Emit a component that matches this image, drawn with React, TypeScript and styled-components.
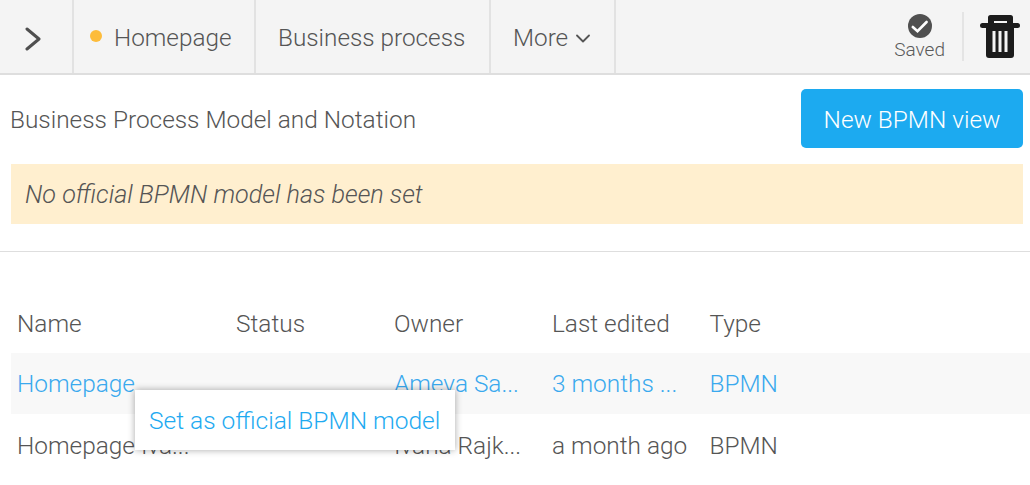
import React from "react";
import styled, { createGlobalStyle } from "styled-components";

const Global = createGlobalStyle`
  html, body { margin: 0; padding: 0; background: #fff; }
  body { font-family: Roboto, "Liberation Sans", sans-serif; font-weight: 300; color: #4a4a4a; overflow: hidden; }
  * { box-sizing: border-box; }
`;

const Page = styled.div`
  width: 1030px;
  height: 485px;
  overflow: hidden;
`;

const TopBar = styled.header`
  display: flex;
  align-items: stretch;
  height: 75px;
  background: #f4f4f4;
  border-bottom: 2px solid #dedede;
`;

const Toggle = styled.div`
  width: 74px;
  display: flex;
  align-items: center;
  padding-left: 25px;
  padding-top: 5px;
  border-right: 2px solid #e2e2e2;
`;

const Tab = styled.div<{ $w: number; $pad: number }>`
  width: ${(p) => p.$w}px;
  padding-left: ${(p) => p.$pad}px;
  padding-top: 3px;
  display: flex;
  align-items: center;
  font-size: 24.3px;
  line-height: 1;
  color: #555;
  border-right: 2px solid #e2e2e2;
  white-space: nowrap;
`;

const Dot = styled.span`
  width: 12px;
  height: 12px;
  border-radius: 50%;
  background: #fdbc3b;
  margin-right: 12px;
  margin-top: -4px;
`;

const Caret = styled.svg`
  margin-left: 8px;
`;

const Actions = styled.div`
  margin-left: auto;
  display: flex;
  align-items: center;
`;

const SavedBox = styled.div`
  display: flex;
  flex-direction: column;
  align-items: center;
  font-size: 19px;
  color: #5a5a5a;
  line-height: 21px;
  margin-right: 17px;
  gap: 1px;
  margin-top: 1px;
`;

const Divider = styled.div`
  width: 2px;
  height: 49px;
  background: #e4e4e4;
  margin-right: 16px;
`;

const Trash = styled.svg`
  margin-right: 10px;
`;

const Main = styled.main`
  padding: 14px 7px 0 11px;
`;

const TitleRow = styled.div`
  display: flex;
  justify-content: space-between;
  align-items: center;
  height: 59px;
`;

const Title = styled.h1`
  margin: 0;
  padding-top: 2px;
  font-size: 24.4px;
  font-weight: 300;
  color: #555;
  margin-left: -1px;
`;

const PrimaryButton = styled.button`
  width: 222px;
  height: 59px;
  padding: 2px 0 0;
  background: #1caaf0;
  color: #fff;
  border: 0;
  border-radius: 5px;
  font-family: inherit;
  font-size: 24.4px;
  font-weight: 300;
`;

const Notice = styled.div`
  margin-top: 16px;
  height: 60px;
  background: #ffefcf;
  display: flex;
  align-items: center;
  padding-left: 14px;
  font-size: 25.2px;
  font-style: italic;
  color: #555;
`;

const Rule = styled.hr`
  border: 0;
  height: 1px;
  background: #dedede;
  margin: 27px -7px 0 -11px;
`;

const Table = styled.div`
  position: relative;
  margin-top: 41px;
  margin-right: -7px;
`;

const Row = styled.div<{ $shade?: boolean; $h: number }>`
  display: grid;
  grid-template-columns: 219px 158px 158px 157.5px 1fr;
  height: ${(p) => p.$h}px;
  align-items: center;
  padding-left: 6px;
  background: ${(p) => (p.$shade ? "#f8f8f8" : "transparent")};
  font-size: 24.4px;
  color: #555;
`;

const Cell = styled.div<{ $link?: boolean }>`
  color: ${(p) => (p.$link ? "#3aa9ee" : "#555")};
  white-space: nowrap;
`;

const Popup = styled.div`
  position: absolute;
  left: 124px;
  top: 97px;
  width: 320px;
  height: 60px;
  background: #fff;
  display: flex;
  align-items: center;
  padding-left: 14px;
  color: #1eaaf1;
  font-size: 24.5px;
  box-shadow: 0 0 7px rgba(0, 0, 0, 0.35);
`;

export default function App() {
  return (
    <Page>
      <Global />
      <TopBar>
        <Toggle>
          <svg width="16" height="24" viewBox="0 0 16 24" fill="none">
            <path d="M2 2l12 10L2 22" stroke="#4f4f4f" strokeWidth="3" strokeLinecap="round" strokeLinejoin="round" />
          </svg>
        </Toggle>
        <Tab $w={182} $pad={16}><Dot />Homepage</Tab>
        <Tab $w={235} $pad={22}>Business process</Tab>
        <Tab $w={125} $pad={22}>
          More
          <Caret width="14" height="9" viewBox="0 0 14 9" fill="none">
            <path d="M1 1.5l6 6 6-6" stroke="#555" strokeWidth="1.8" strokeLinecap="round" strokeLinejoin="round" />
          </Caret>
        </Tab>
        <Actions>
          <SavedBox>
            <svg width="24" height="24" viewBox="0 0 24 24">
              <circle cx="12" cy="12" r="12" fill="#505050" />
              <path d="M4.8 13l4.7 4.2L18.6 8" stroke="#fff" strokeWidth="2.6" strokeLinecap="round" fill="none" />
            </svg>
            Saved
          </SavedBox>
          <Divider />
          <Trash width="40" height="43" viewBox="0 0 40 43">
            <rect x="0" y="8" width="40" height="5" rx="2.5" fill="#1c1c1c" />
            <path d="M8 9V2.5A2.5 2.5 0 0110.5 0h20A2.5 2.5 0 0133 2.5V9h-6V6H14v3z" fill="#1c1c1c" />
            <path d="M6 12h28v28a3 3 0 01-3 3H9a3 3 0 01-3-3z" fill="#1c1c1c" />
            <rect x="12.5" y="16" width="3" height="21" fill="#f4f4f4" />
            <rect x="18.5" y="16" width="3" height="21" fill="#f4f4f4" />
            <rect x="24.5" y="16" width="3" height="21" fill="#f4f4f4" />
          </Trash>
        </Actions>
      </TopBar>
      <Main>
        <TitleRow>
          <Title>Business Process Model and Notation</Title>
          <PrimaryButton>New BPMN view</PrimaryButton>
        </TitleRow>
        <Notice>No official BPMN model has been set</Notice>
        <Rule />
        <Table>
          <Row $h={60}>
            <Cell>Name</Cell><Cell>Status</Cell><Cell>Owner</Cell><Cell>Last edited</Cell><Cell>Type</Cell>
          </Row>
          <Row $shade $h={61}>
            <Cell $link>Homepage</Cell><Cell /><Cell $link>Ameva Sa...</Cell><Cell $link>3 months ...</Cell><Cell $link>BPMN</Cell>
          </Row>
          <Row $h={62}>
            <Cell>Homepage Iva...</Cell><Cell /><Cell>Ivana Rajk...</Cell><Cell>a month ago</Cell><Cell>BPMN</Cell>
          </Row>
          <Popup>Set as official BPMN model</Popup>
        </Table>
      </Main>
    </Page>
  );
}
